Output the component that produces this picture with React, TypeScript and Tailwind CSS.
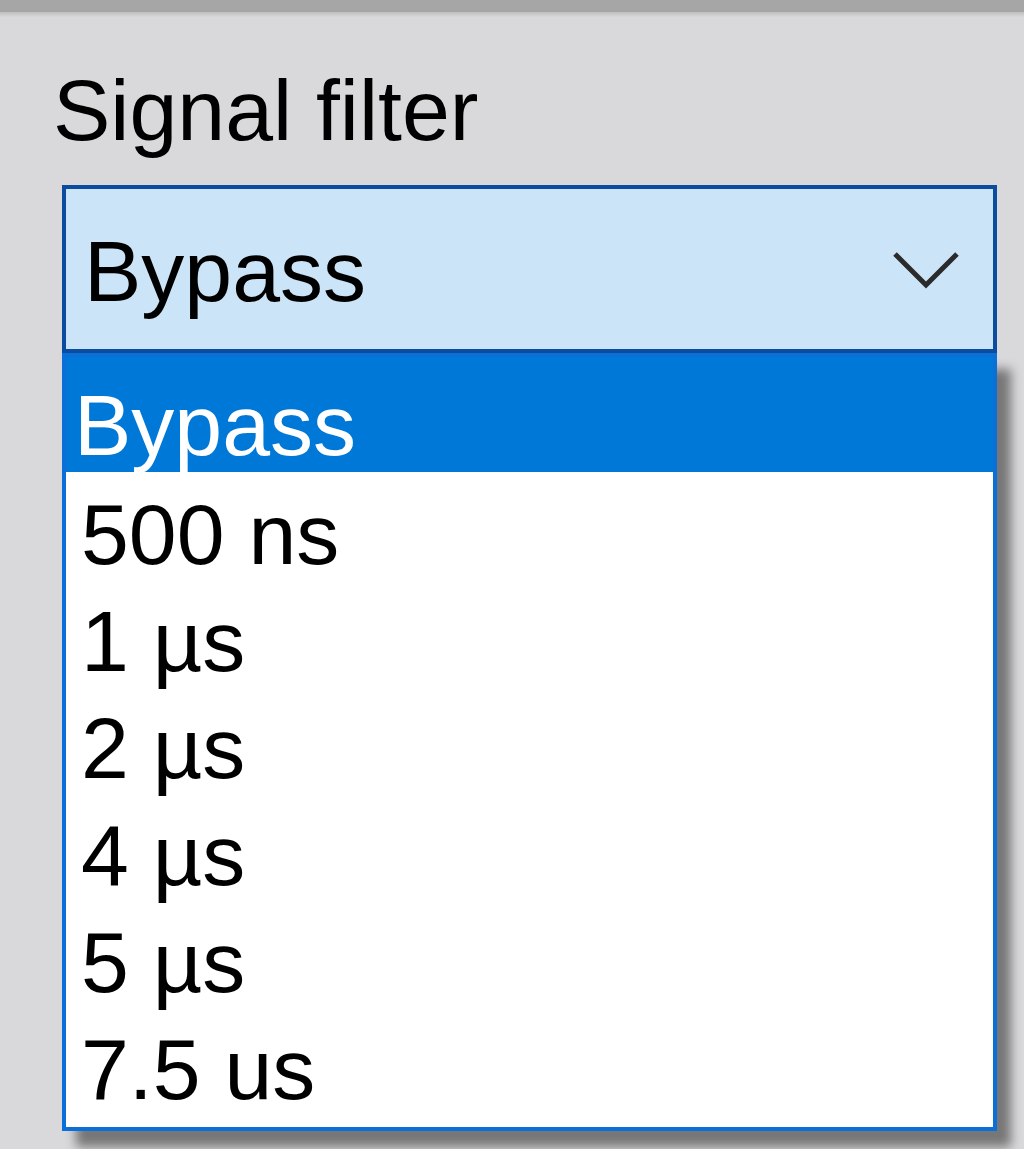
import { FunctionComponent } from "react";

const options = ["500 ns", "1 µs", "2 µs", "4 µs", "5 µs", "7.5 us"];

const Chevron: FunctionComponent = () => (
    <svg width="68" height="38" viewBox="0 0 68 38" className="ml-auto mt-[62px] shrink-0">
        <path d="M3 3 L34 34 L65 3" fill="none" stroke="#2b2b2b" strokeWidth="5" strokeLinejoin="miter" />
    </svg>
);

const App: FunctionComponent = () => {
    return (
        <div
            className="w-[1024px] h-[1149px] bg-[#d9d8da] overflow-hidden text-black"
            style={{ fontFamily: '"Liberation Sans", Arial, sans-serif' }}
        >
            <div className="h-[12px] bg-[#a6a6a6]" />
            <div className="h-[5px] bg-gradient-to-b from-[#bfbfbf] to-[#d9d8da]" />

            {/* label */}
            <div className="pt-[43px] pl-[53px] text-[86px] leading-[100px]">Signal filter</div>

            <div className="mt-[25px] ml-[62px] w-[935px]">
                {/* combo box */}
                <div className="h-[168px] border-[4px] border-[#0b4c9e] bg-[#cce4f7] flex items-start pl-[18px] pr-[33px]">
                    <span className="pt-[32px] text-[86px] leading-[100px]">Bypass</span>
                    <Chevron />
                </div>

                {/* dropdown list */}
                <div className="border-[4px] border-[#0a6fd6] bg-white shadow-[14px_16px_10px_rgba(0,0,0,0.45)]">
                    <div className="h-[115px] overflow-hidden bg-[#0078d7] pl-[8px] pt-[18px] text-white text-[86px] leading-[100px]">
                        Bypass
                    </div>
                    <ul className="pt-[9px] pb-[4px]">
                        {options.map((o) => (
                            <li key={o} className="h-[107px] pl-[15px] text-[86px] leading-[107px]">
                                {o}
                            </li>
                        ))}
                    </ul>
                </div>
            </div>
        </div>
    );
};

export default App;
